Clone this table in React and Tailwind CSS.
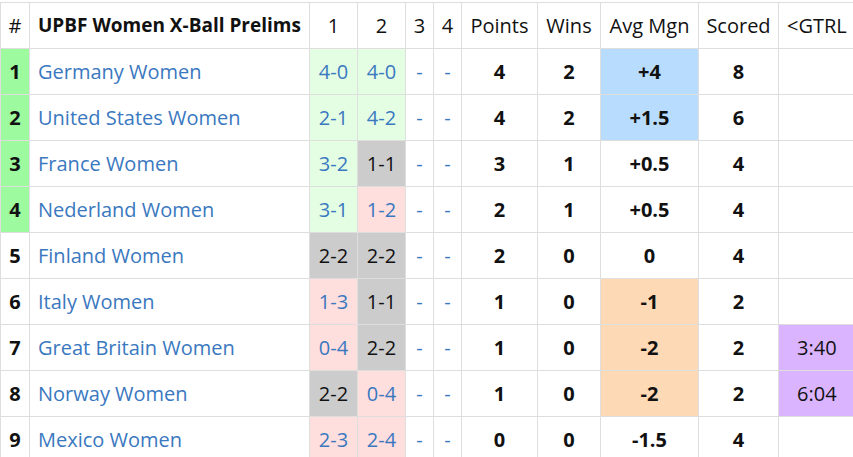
import React from 'react';

const rows = [
  { rank: 1, name: 'Germany Women', r1: ['4-0', 'w'], r2: ['4-0', 'w'], pts: 4, wins: 2, mgn: ['+4', 'b'], scored: 8, top: true },
  { rank: 2, name: 'United States Women', r1: ['2-1', 'w'], r2: ['4-2', 'w'], pts: 4, wins: 2, mgn: ['+1.5', 'b'], scored: 6, top: true },
  { rank: 3, name: 'France Women', r1: ['3-2', 'w'], r2: ['1-1', 'd'], pts: 3, wins: 1, mgn: ['+0.5', ''], scored: 4, top: true },
  { rank: 4, name: 'Nederland Women', r1: ['3-1', 'w'], r2: ['1-2', 'l'], pts: 2, wins: 1, mgn: ['+0.5', ''], scored: 4, top: true },
  { rank: 5, name: 'Finland Women', r1: ['2-2', 'd'], r2: ['2-2', 'd'], pts: 2, wins: 0, mgn: ['0', ''], scored: 4 },
  { rank: 6, name: 'Italy Women', r1: ['1-3', 'l'], r2: ['1-1', 'd'], pts: 1, wins: 0, mgn: ['-1', 'o'], scored: 2 },
  { rank: 7, name: 'Great Britain Women', r1: ['0-4', 'l'], r2: ['2-2', 'd'], pts: 1, wins: 0, mgn: ['-2', 'o'], scored: 2, gtrl: '3:40' },
  { rank: 8, name: 'Norway Women', r1: ['2-2', 'd'], r2: ['0-4', 'l'], pts: 1, wins: 0, mgn: ['-2', 'o'], scored: 2, gtrl: '6:04' },
  { rank: 9, name: 'Mexico Women', r1: ['2-3', 'l'], r2: ['2-4', 'l'], pts: 0, wins: 0, mgn: ['-1.5', ''], scored: 4 },
];

const resultClass = {
  w: 'bg-[#e4fee4] text-[#3a78c0]',
  l: 'bg-[#ffdede] text-[#3a78c0]',
  d: 'bg-[#cccccc] text-[#111]',
};

const mgnClass = {
  b: 'bg-[#b8dcfe]',
  o: 'bg-[#fdd9b5]',
  '': '',
};

const cell = 'border border-[#dedede] text-center';

const App = () => {
  return (
    <div className="w-[853px] h-[457px] overflow-hidden bg-white pt-[2px] font-['Open_Sans',sans-serif] text-[20px] text-[#111]">
      <table className="table-fixed border-collapse w-[860px]">
        <thead>
          <tr className="h-[46px]">
            <th className={`${cell} w-[29px] font-normal`}>#</th>
            <th className={`${cell} w-[280px] text-left pl-2 font-bold text-[19px]`}>UPBF Women X-Ball Prelims</th>
            <th className={`${cell} w-[48px] font-normal`}>1</th>
            <th className={`${cell} w-[48px] font-normal`}>2</th>
            <th className={`${cell} w-[28px] font-normal`}>3</th>
            <th className={`${cell} w-[28px] font-normal`}>4</th>
            <th className={`${cell} w-[76px] font-normal`}>Points</th>
            <th className={`${cell} w-[63px] font-normal`}>Wins</th>
            <th className={`${cell} w-[98px] font-normal`}>Avg Mgn</th>
            <th className={`${cell} w-[80px] font-normal`}>Scored</th>
            <th className={`${cell} w-[82px] font-normal text-left pl-[8px]`}>&lt;GTRL</th>
          </tr>
        </thead>
        <tbody>
          {rows.map((row) => (
            <tr key={row.rank} className="h-[46px]">
              <td className={`${cell} font-bold ${row.top ? 'bg-[#9efa9e]' : ''}`}>{row.rank}</td>
              <td className={`${cell} text-left pl-2 text-[#3a78c0]`}>{row.name}</td>
              <td className={`${cell} ${resultClass[row.r1[1]]}`}>{row.r1[0]}</td>
              <td className={`${cell} ${resultClass[row.r2[1]]}`}>{row.r2[0]}</td>
              <td className={`${cell} text-[#3a78c0]`}>-</td>
              <td className={`${cell} text-[#3a78c0]`}>-</td>
              <td className={`${cell} font-bold`}>{row.pts}</td>
              <td className={`${cell} font-bold`}>{row.wins}</td>
              <td className={`${cell} font-bold ${mgnClass[row.mgn[1]]}`}>{row.mgn[0]}</td>
              <td className={`${cell} font-bold`}>{row.scored}</td>
              <td className={`${cell} text-left pl-[18px] ${row.gtrl ? 'bg-[#dab4fe]' : ''}`}>{row.gtrl}</td>
            </tr>
          ))}
        </tbody>
      </table>
    </div>
  );
};

export default App;
